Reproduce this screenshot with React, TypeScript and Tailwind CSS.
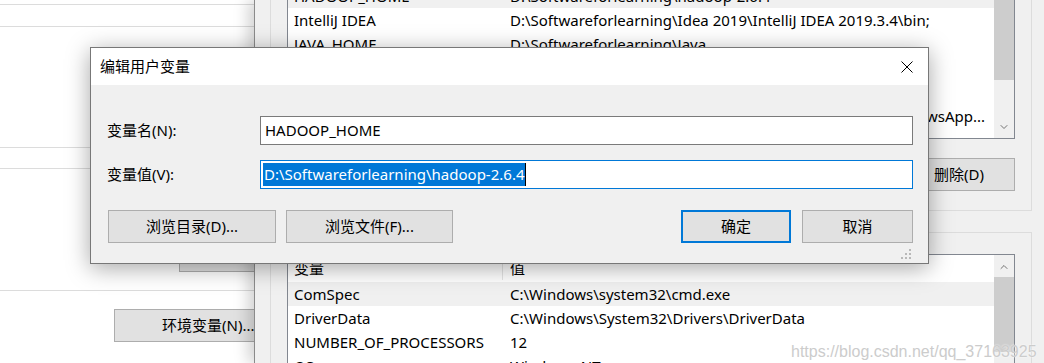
import { ChevronDown, ChevronUp } from 'lucide-react';

const FONT = "font-['Noto_Sans','Noto_Sans_CJK_SC',sans-serif]";

// user variables (top list, mostly hidden under the dialog)
const USER_VARS = [
  { name: 'HADOOP_HOME', value: 'D:\\Softwareforlearning\\hadoop-2.6.4', selected: true },
  { name: 'IntelliJ IDEA', value: 'D:\\Softwareforlearning\\Idea 2019\\IntelliJ IDEA 2019.3.4\\bin;' },
  { name: 'JAVA_HOME', value: 'D:\\Softwareforlearning\\Java' },
  { name: 'OneDrive', value: 'C:\\Users\\Administrator\\OneDrive' },
  { name: 'OneDriveConsumer', value: 'C:\\Users\\Administrator\\OneDrive' },
  { name: 'Path', value: 'C:\\Users\\Administrator\\AppData\\Local\\Microsoft\\WindowsApp...', clip: true },
  { name: 'TEMP', value: 'C:\\Users\\Administrator\\AppData\\Local\\Temp' },
];

const SYS_VARS = [
  { name: 'ComSpec', value: 'C:\\Windows\\system32\\cmd.exe', selected: true },
  { name: 'DriverData', value: 'C:\\Windows\\System32\\Drivers\\DriverData' },
  { name: 'NUMBER_OF_PROCESSORS', value: '12' },
  { name: 'OS', value: 'Windows_NT' },
];

function Row({ name, value, selected, clip }: { name: string; value: string; selected?: boolean; clip?: boolean }) {
  return (
    <div className={`flex h-6 shrink-0 items-center text-[15px] text-black ${selected ? 'bg-[#f0f0f0]' : ''}`}>
      <div className="w-[222px] shrink-0 truncate pl-[6px]">{name}</div>
      {clip ? (
        <div className="flex w-[475px] shrink-0 justify-end overflow-hidden whitespace-nowrap">{value}</div>
      ) : (
        <div className="whitespace-nowrap">{value}</div>
      )}
    </div>
  );
}

function WinButton({ label, primary = false, className = '' }: { label: string; primary?: boolean; className?: string }) {
  return (
    <div
      className={`flex h-[33px] shrink-0 items-center justify-center bg-[#e1e1e1] text-[15px] text-black ${
        primary ? 'border-2 border-[#0078d7]' : 'border border-[#adadad]'
      } ${className}`}
    >
      {label}
    </div>
  );
}

function ResizeGrip() {
  return (
    <svg width="12" height="12" viewBox="0 0 12 12" className="fill-[#b8b8b8]">
      <rect x="8" y="0" width="2" height="2" />
      <rect x="4" y="4" width="2" height="2" />
      <rect x="8" y="4" width="2" height="2" />
      <rect x="0" y="8" width="2" height="2" />
      <rect x="4" y="8" width="2" height="2" />
      <rect x="8" y="8" width="2" height="2" />
    </svg>
  );
}

export default function App() {
  return (
    <div className={`relative h-[363px] w-[1044px] overflow-hidden bg-white ${FONT}`}>
      {/* System properties window, left */}
      <div className="absolute left-0 top-0 flex h-full w-[260px] flex-col bg-white">
        <div className="mt-[4px] h-px bg-[#dcdcdc]" />
        <div className="mt-[21px] h-px bg-[#dcdcdc]" />
        <div className="mt-[120px] h-px bg-[#dcdcdc]" />
        <div className="mt-[20px] h-px bg-[#dcdcdc]" />
        <WinButton label="" className="ml-[179px] mt-[70px] w-[80px]" />
        <div className="mt-[18px] h-px bg-[#dcdcdc]" />
        <div className="ml-[114px] mt-[18px] flex h-[33px] w-[190px] items-center whitespace-nowrap border border-[#adadad] bg-[#e1e1e1] pl-[47px] text-[15px]">
          环境变量(N)...
        </div>
      </div>

      {/* Environment variables window */}
      <div className="absolute left-[254px] top-0 flex h-full w-[800px] flex-col border-l border-[#8a8a8a] bg-[#f0f0f0] pl-[15px] shadow-[-6px_0_14px_rgba(0,0,0,0.18)]">
        {/* user vars group */}
        <div className="mt-[-40px] flex h-[251px] w-[762px] shrink-0 flex-col border border-[#dcdcdc] px-4">
          <div className="mt-[22px] flex h-[156px] w-[728px] shrink-0 border border-[#828790] bg-white">
            <div className="flex flex-1 flex-col overflow-hidden">
              {USER_VARS.map((v) => (
                <Row key={v.name} {...v} />
              ))}
            </div>
            <div className="flex w-[20px] flex-col bg-[#f0f0f0]">
              <div className="mt-[16px] h-[80px] bg-[#cdcdcd]" />
              <ChevronDown className="ml-[4px] mt-[41px] h-3 w-3 text-[#606060]" strokeWidth={1.75} />
            </div>
          </div>
          <div className="mt-[19px] flex justify-end">
            <WinButton label="删除(D)" className="w-[112px]" />
          </div>
        </div>

        {/* system vars group */}
        <div className="mt-[21px] flex w-[762px] flex-1 flex-col border border-b-0 border-[#dcdcdc] px-4">
          <div className="mt-[21px] flex w-[728px] flex-1 border border-b-0 border-[#828790] bg-white">
            <div className="flex flex-1 flex-col overflow-hidden">
              <div className="flex h-[27px] shrink-0 items-center text-[15px]">
                <div className="w-[215px] shrink-0 border-r border-[#e5e5e5] pl-[6px]">变量</div>
                <div className="pl-[7px]">值</div>
              </div>
              {SYS_VARS.map((v) => (
                <Row key={v.name} {...v} />
              ))}
            </div>
            <div className="flex w-[20px] flex-col bg-[#f0f0f0]">
              <ChevronUp className="ml-[4px] mt-[6px] h-3 w-3 text-[#606060]" strokeWidth={1.75} />
              <div className="mt-[4px] h-[75px] bg-[#cdcdcd]" />
            </div>
          </div>
        </div>
      </div>

      {/* Edit user variable dialog */}
      <div className="absolute left-[90px] top-[47px] flex h-[217px] w-[839px] flex-col border border-[#777777] bg-[#f0f0f0] shadow-[0_4px_22px_rgba(0,0,0,0.35)]">
        <div className="flex h-[37px] shrink-0 items-center justify-between bg-white pl-[9px] pr-[15px]">
          <span className="text-[15px] text-black">编辑用户变量</span>
          <svg width="12" height="12" viewBox="0 0 12 12" className="stroke-black">
            <path d="M0.5 0.5 L11.5 11.5 M11.5 0.5 L0.5 11.5" strokeWidth="1" />
          </svg>
        </div>
        <div className="flex flex-1 flex-col pl-4 pr-[15px]">
          <div className="mt-[31px] flex items-center">
            <span className="w-[153px] text-[15px]">变量名(N):</span>
            <div className="flex h-[29px] flex-1 items-center border border-[#7a7a7a] bg-white pl-[4px] text-[15px]">
              HADOOP_HOME
            </div>
          </div>
          <div className="mt-[15px] flex items-center">
            <span className="w-[153px] text-[15px]">变量值(V):</span>
            <div className="flex h-[29px] flex-1 items-center border border-[#0078d7] bg-white pl-[2px] text-[15px]">
              <span className="bg-[#0078d7] px-[1px] leading-[23px] text-white">D:\Softwareforlearning\hadoop-2.6.4</span>
              <span className="h-[23px] w-px bg-black" />
            </div>
          </div>
          <div className="mt-[21px] flex items-center">
            <WinButton label="浏览目录(D)..." className="ml-px w-[168px]" />
            <WinButton label="浏览文件(F)..." className="ml-[10px] w-[167px]" />
            <div className="flex-1" />
            <WinButton label="确定" primary className="w-[110px]" />
            <WinButton label="取消" className="ml-[11px] w-[111px]" />
          </div>
          <div className="mb-[2px] mt-auto flex justify-end">
            <ResizeGrip />
          </div>
        </div>
      </div>

      {/* blog watermark */}
      <div className="absolute left-[791px] top-[340px] font-['Liberation_Sans',sans-serif] text-[16px] text-[#cccccc] [text-shadow:0_0_2px_#ffffff]">
        https://blog.csdn.net/qq_37163925
      </div>
    </div>
  );
}
